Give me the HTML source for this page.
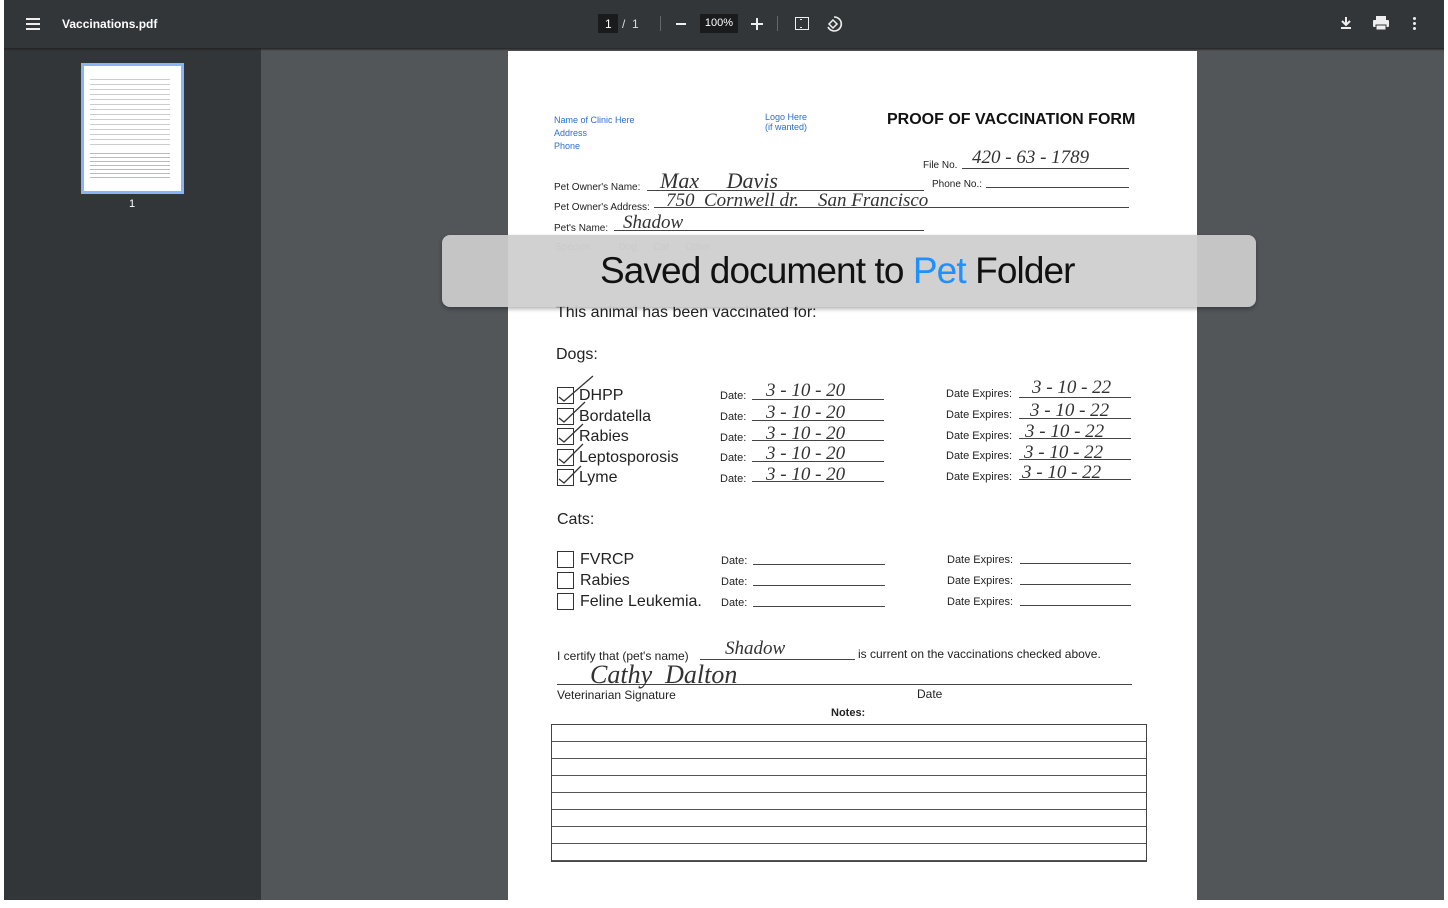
<!DOCTYPE html><html><head><style>
body{margin:0;width:1448px;height:908px;background:#fff;position:relative;overflow:hidden;font-family:"Liberation Sans",sans-serif}
.a{position:absolute}
.t{font-size:11px;color:#222}
.l{border-bottom:1px solid #444;position:absolute;height:0}
.h{position:absolute;font-family:"Liberation Serif",serif;font-style:italic;color:#333;font-size:19px}
.cb{position:absolute;width:15px;height:15px;border:1.5px solid #333}
.big{position:absolute;font-size:16px;color:#222}
</style></head><body>
<div class="a" style="left:4px;top:0;width:1440px;height:48px;background:#323639"></div>
<div class="a" style="left:4px;top:48px;width:257px;height:852px;background:#323639"></div>
<div class="a" style="left:261px;top:48px;width:1183px;height:852px;background:#525659"></div>
<div class="a" style="left:4px;top:48px;width:1440px;height:3px;background:linear-gradient(#222,transparent)"></div>
<!-- toolbar -->
<div class="a" style="left:26px;top:18px;width:14px;height:2px;background:#eee;box-shadow:0 5px 0 #eee,0 10px 0 #eee"></div>
<div class="a" style="left:62px;top:17px;color:#fff;font-size:12px;font-weight:bold">Vaccinations.pdf</div>
<div class="a" style="left:598px;top:14px;width:20px;height:19px;background:#191b1c"></div>
<div class="a" style="left:605px;top:17px;color:#fff;font-size:12px">1</div>
<div class="a" style="left:622px;top:17px;color:#ddd;font-size:12px">/&nbsp;&nbsp;1</div>
<div class="a" style="left:660px;top:16px;width:1px;height:15px;background:#666"></div>
<div class="a" style="left:676px;top:23px;width:10px;height:2px;background:#eee"></div>
<div class="a" style="left:700px;top:14px;width:38px;height:19px;background:#191b1c;color:#fff;font-size:11px;text-align:center;line-height:19px">100%</div>
<div class="a" style="left:751px;top:23px;width:12px;height:2px;background:#eee"></div>
<div class="a" style="left:756px;top:18px;width:2px;height:12px;background:#eee"></div>
<div class="a" style="left:777px;top:16px;width:1px;height:15px;background:#666"></div>
<div class="a" style="left:795px;top:17px;width:12px;height:11px;border:1.5px solid #eee"></div>
<div class="a" style="left:800px;top:19px;width:2px;height:7px;border-top:1px solid #eee;border-bottom:1px solid #eee"></div>
<svg class="a" style="left:824px;top:14px" width="20" height="20"><path d="M10 3 A7 7 0 1 1 4 13" fill="none" stroke="#eee" stroke-width="1.6"/><path d="M9 6 L5 10 L9 14 L13 10Z" fill="none" stroke="#eee" stroke-width="1.5"/></svg>
<svg class="a" style="left:1338px;top:15px" width="16" height="16"><path d="M8 2v8M4 6l4 4 4-4M3 13h10" stroke="#eee" stroke-width="2" fill="none"/></svg>
<svg class="a" style="left:1372px;top:15px" width="18" height="16"><rect x="4" y="1" width="10" height="4" fill="#eee"/><rect x="1" y="5" width="16" height="7" rx="1" fill="#eee"/><rect x="4" y="10" width="10" height="5" fill="#eee" stroke="#323639"/></svg>
<div class="a" style="left:1413px;top:17px;width:3px;height:3px;background:#eee;border-radius:50%;box-shadow:0 5px 0 #eee,0 10px 0 #eee"></div>
<!-- thumbnail -->
<div class="a" style="left:81px;top:63px;width:97px;height:125px;background:#fff;border:3px solid #8ab4f8"></div>
<div class="a" style="left:90px;top:75px;width:80px;height:70px;background:repeating-linear-gradient(#fff 0 4px,#ccc 4px 5px)"></div>
<div class="a" style="left:90px;top:150px;width:80px;height:28px;background:repeating-linear-gradient(#fff 0 3px,#bbb 3px 4px)"></div>
<div class="a" style="left:129px;top:198px;color:#fff;font-size:11px">1</div>
<!-- page -->
<div class="a" style="left:508px;top:51px;width:689px;height:849px;background:#fff"></div>
<div class="a" style="left:554px;top:114px;color:#2a6fcf;font-size:9px;line-height:13px">Name of Clinic Here<br>Address<br>Phone</div>
<div class="a" style="left:765px;top:112px;color:#2a6fcf;font-size:9px;line-height:10px">Logo Here<br>(if wanted)</div>
<div class="a" style="left:887px;top:111px;font-size:16px;font-weight:bold;color:#111">PROOF OF VACCINATION FORM</div>
<div class="a t" style="left:923px;top:160px;font-size:10px">File No.</div><div class="l" style="left:962px;top:168px;width:167px"></div>
<div class="h" style="left:972px;top:147px">420 - 63 - 1789</div>
<div class="a t" style="left:554px;top:182px;font-size:10px">Pet Owner's Name:</div><div class="l" style="left:647px;top:190px;width:277px"></div>
<div class="h" style="left:660px;top:168px;font-size:22px">Max &nbsp;&nbsp;&nbsp;&nbsp;Davis</div>
<div class="a t" style="left:932px;top:179px;font-size:10px">Phone No.:</div><div class="l" style="left:986px;top:187px;width:143px"></div>
<div class="a t" style="left:554px;top:202px;font-size:10px">Pet Owner's Address:</div><div class="l" style="left:654px;top:207px;width:475px"></div>
<div class="h" style="left:666px;top:190px">750 &nbsp;Cornwell dr. &nbsp;&nbsp;&nbsp;San Francisco</div>
<div class="a t" style="left:554px;top:223px;font-size:10px">Pet's Name:</div><div class="l" style="left:614px;top:230px;width:310px"></div>
<div class="h" style="left:623px;top:212px">Shadow</div>
<div class="a t" style="left:555px;top:242px;font-size:10px;color:#999">Species: &nbsp;&nbsp;&nbsp;&nbsp;&nbsp;&nbsp;&nbsp;&nbsp;Dog &nbsp;&nbsp;&nbsp;&nbsp;&nbsp;Cat &nbsp;&nbsp;&nbsp;&nbsp;&nbsp;Other</div>
<div class="big" style="left:556px;top:304px">This animal has been vaccinated for:</div>
<div class="big" style="left:556px;top:346px">Dogs:</div>
<div class="big" style="left:557px;top:511px">Cats:</div>
<div class="cb" style="left:557px;top:387px"></div><div class="big" style="left:579px;top:387px">DHPP</div>
<div class="cb" style="left:557px;top:408px"></div><div class="big" style="left:579px;top:408px">Bordatella</div>
<div class="cb" style="left:557px;top:428px"></div><div class="big" style="left:579px;top:428px">Rabies</div>
<div class="cb" style="left:557px;top:449px"></div><div class="big" style="left:579px;top:449px">Leptosporosis</div>
<div class="cb" style="left:557px;top:469px"></div><div class="big" style="left:579px;top:469px">Lyme</div>
<svg class="a" style="left:555px;top:372px" width="45" height="115"><path d="M4 25 L9 29 L38 4 M4 46 L9 50 L30 30 M4 66 L9 70 L28 52 M4 87 L9 91 L28 72 M4 107 L9 111 L26 94" stroke="#333" stroke-width="1.3" fill="none"/></svg>
<div class="a t" style="left:720px;top:390px">Date:</div>
<div class="a t" style="left:720px;top:411px">Date:</div><div class="a t" style="left:720px;top:432px">Date:</div><div class="a t" style="left:720px;top:452px">Date:</div><div class="a t" style="left:720px;top:473px">Date:</div>
<div class="l" style="left:752px;top:399px;width:132px"></div><div class="l" style="left:752px;top:420px;width:132px"></div><div class="l" style="left:752px;top:440px;width:132px"></div><div class="l" style="left:752px;top:461px;width:132px"></div><div class="l" style="left:752px;top:481px;width:132px"></div>
<div class="h" style="left:766px;top:380px">3 - 10 - 20</div><div class="h" style="left:766px;top:402px">3 - 10 - 20</div><div class="h" style="left:766px;top:423px">3 - 10 - 20</div><div class="h" style="left:766px;top:443px">3 - 10 - 20</div><div class="h" style="left:766px;top:464px">3 - 10 - 20</div>
<div class="a t" style="left:946px;top:388px">Date Expires:</div><div class="a t" style="left:946px;top:409px">Date Expires:</div><div class="a t" style="left:946px;top:430px">Date Expires:</div><div class="a t" style="left:946px;top:450px">Date Expires:</div><div class="a t" style="left:946px;top:471px">Date Expires:</div>
<div class="l" style="left:1019px;top:397px;width:112px"></div><div class="l" style="left:1019px;top:418px;width:112px"></div><div class="l" style="left:1019px;top:438px;width:112px"></div><div class="l" style="left:1019px;top:459px;width:112px"></div><div class="l" style="left:1019px;top:479px;width:112px"></div>
<div class="h" style="left:1032px;top:377px">3 - 10 - 22</div><div class="h" style="left:1030px;top:400px">3 - 10 - 22</div><div class="h" style="left:1025px;top:421px">3 - 10 - 22</div><div class="h" style="left:1024px;top:442px">3 - 10 - 22</div><div class="h" style="left:1022px;top:462px">3 - 10 - 22</div>
<div class="cb" style="left:557px;top:551px"></div><div class="big" style="left:580px;top:551px">FVRCP</div>
<div class="cb" style="left:557px;top:572px"></div><div class="big" style="left:580px;top:572px">Rabies</div>
<div class="cb" style="left:557px;top:593px"></div><div class="big" style="left:580px;top:593px">Feline Leukemia.</div>
<div class="a t" style="left:721px;top:555px">Date:</div><div class="a t" style="left:721px;top:576px">Date:</div><div class="a t" style="left:721px;top:597px">Date:</div>
<div class="l" style="left:753px;top:564px;width:132px"></div><div class="l" style="left:753px;top:585px;width:132px"></div><div class="l" style="left:753px;top:606px;width:132px"></div>
<div class="a t" style="left:947px;top:554px">Date Expires:</div><div class="a t" style="left:947px;top:575px">Date Expires:</div><div class="a t" style="left:947px;top:596px">Date Expires:</div>
<div class="l" style="left:1020px;top:563px;width:111px"></div><div class="l" style="left:1020px;top:584px;width:111px"></div><div class="l" style="left:1020px;top:605px;width:111px"></div>
<div class="a" style="left:557px;top:649px;font-size:12px;color:#222">I certify that (pet's name)</div><div class="l" style="left:700px;top:659px;width:155px"></div>
<div class="h" style="left:725px;top:638px">Shadow</div>
<div class="a" style="left:858px;top:647px;font-size:12px;color:#222">is current on the vaccinations checked above.</div>
<div class="l" style="left:557px;top:684px;width:575px"></div>
<div class="h" style="left:590px;top:660px;font-size:26px">Cathy &nbsp;Dalton</div>
<div class="a" style="left:557px;top:688px;font-size:12px;color:#222">Veterinarian Signature</div>
<div class="a" style="left:917px;top:687px;font-size:12px;color:#222">Date</div>
<div class="a" style="left:831px;top:707px;font-size:11px;font-weight:bold;color:#222">Notes:</div>
<div class="a" style="left:551px;top:724px;width:594px;height:136px;border:1px solid #444;background:repeating-linear-gradient(#fff 0 16px,#555 16px 17px)"></div>
<div class="a" style="left:442px;top:235px;width:814px;height:72px;border-radius:8px;background:rgba(205,205,205,0.93);box-shadow:0 2px 4px rgba(0,0,0,.3)"></div>
<div class="a" style="left:600px;top:250px;font-size:37px;color:#111;letter-spacing:-0.9px">Saved document to <span style="color:#1e90ff">Pet</span> Folder</div>
</body></html>
